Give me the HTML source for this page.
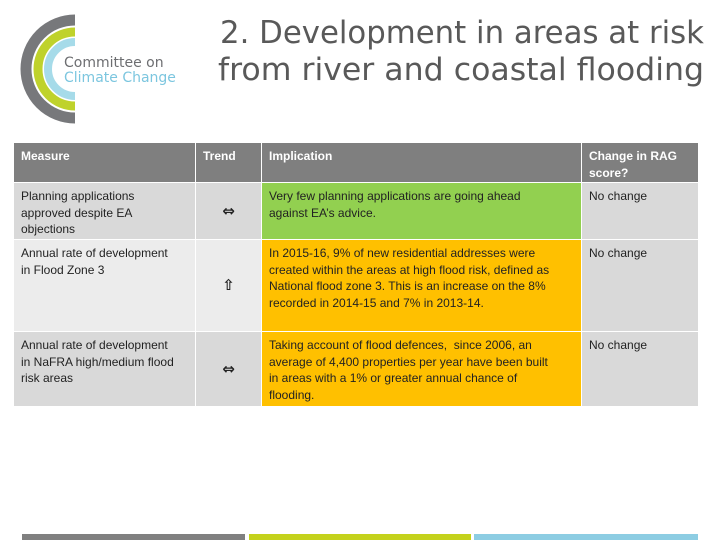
<!DOCTYPE html>
<html><head><meta charset="utf-8"><style>
body{margin:0;width:720px;height:540px;background:#fff;position:relative;overflow:hidden;font-family:"DejaVu Sans","Liberation Sans",sans-serif}
.c{position:absolute;box-sizing:border-box;padding:5px 7px;font-family:"Liberation Sans",sans-serif;font-size:12px;line-height:16.5px;color:#222;white-space:nowrap;overflow:hidden}
.h{background:#7f7f7f;color:#fff;font-weight:bold}
.g1{background:#d9d9d9}.g2{background:#ececec}
.gr{background:#92d050}.or{background:#ffc000}
.ar{text-align:center;padding:0;font-size:15px;font-weight:bold;font-family:"DejaVu Sans",sans-serif}
.bar{position:absolute;top:534px;height:6px}
</style></head><body>
<svg style="position:absolute;left:0;top:0" width="720" height="130">
<path d="M75 20 A49 49 0 0 0 75 118" fill="none" stroke="#77787b" stroke-width="11"/>
<path d="M75 32 A37 37 0 0 0 75 106" fill="none" stroke="#bfd22b" stroke-width="9"/>
<path d="M75 42 A27 27 0 0 0 75 96" fill="none" stroke="#a6dbe9" stroke-width="8"/>
<text x="64" y="67" font-family="DejaVu Sans" font-size="14" fill="#6d6e71">Committee on</text>
<text x="64" y="82" font-family="DejaVu Sans" font-size="14" fill="#7cc6df">Climate Change</text>
<text x="220" y="43" font-family="DejaVu Sans" font-size="31" fill="#595959" textLength="484" lengthAdjust="spacingAndGlyphs">2. Development in areas at risk</text>
<text x="218" y="80" font-family="DejaVu Sans" font-size="31" fill="#595959" textLength="486" lengthAdjust="spacingAndGlyphs">from river and coastal flooding</text>
</svg>

<div class="c h" style="left:14px;top:143px;width:181px;height:39px">Measure</div>
<div class="c h" style="left:196px;top:143px;width:65px;height:39px">Trend</div>
<div class="c h" style="left:262px;top:143px;width:319px;height:39px">Implication</div>
<div class="c h" style="left:582px;top:143px;width:116px;height:39px">Change in RAG<br>score?</div>

<div class="c g1" style="left:14px;top:183px;width:181px;height:56px">Planning applications<br>approved despite EA<br>objections</div>
<div class="c g1 ar" style="left:196px;top:183px;width:65px;height:56px;line-height:56px">⇔</div>
<div class="c gr" style="left:262px;top:183px;width:319px;height:56px">Very few planning applications are going ahead<br>against EA’s advice.</div>
<div class="c g1" style="left:582px;top:183px;width:116px;height:56px">No change</div>

<div class="c g2" style="left:14px;top:240px;width:181px;height:91px">Annual rate of development<br>in Flood Zone 3</div>
<div class="c g2 ar" style="left:196px;top:240px;width:65px;height:91px;line-height:91px">⇧</div>
<div class="c or" style="left:262px;top:240px;width:319px;height:91px">In 2015-16, 9% of new residential addresses were<br>created within the areas at high flood risk, defined as<br>National flood zone 3. This is an increase on the 8%<br>recorded in 2014-15 and 7% in 2013-14.</div>
<div class="c g1" style="left:582px;top:240px;width:116px;height:91px">No change</div>

<div class="c g1" style="left:14px;top:332px;width:181px;height:74px">Annual rate of development<br>in NaFRA high/medium flood<br>risk areas</div>
<div class="c g1 ar" style="left:196px;top:332px;width:65px;height:74px;line-height:74px">⇔</div>
<div class="c or" style="left:262px;top:332px;width:319px;height:74px">Taking account of flood defences,&nbsp; since 2006, an<br>average of 4,400 properties per year have been built<br>in areas with a 1% or greater annual chance of<br>flooding.</div>
<div class="c g1" style="left:582px;top:332px;width:116px;height:74px">No change</div>

<div class="bar" style="left:22px;width:223px;background:#808080"></div>
<div class="bar" style="left:249px;width:222px;background:#c4d21c"></div>
<div class="bar" style="left:474px;width:224px;background:#8dcde3"></div>
</body></html>
